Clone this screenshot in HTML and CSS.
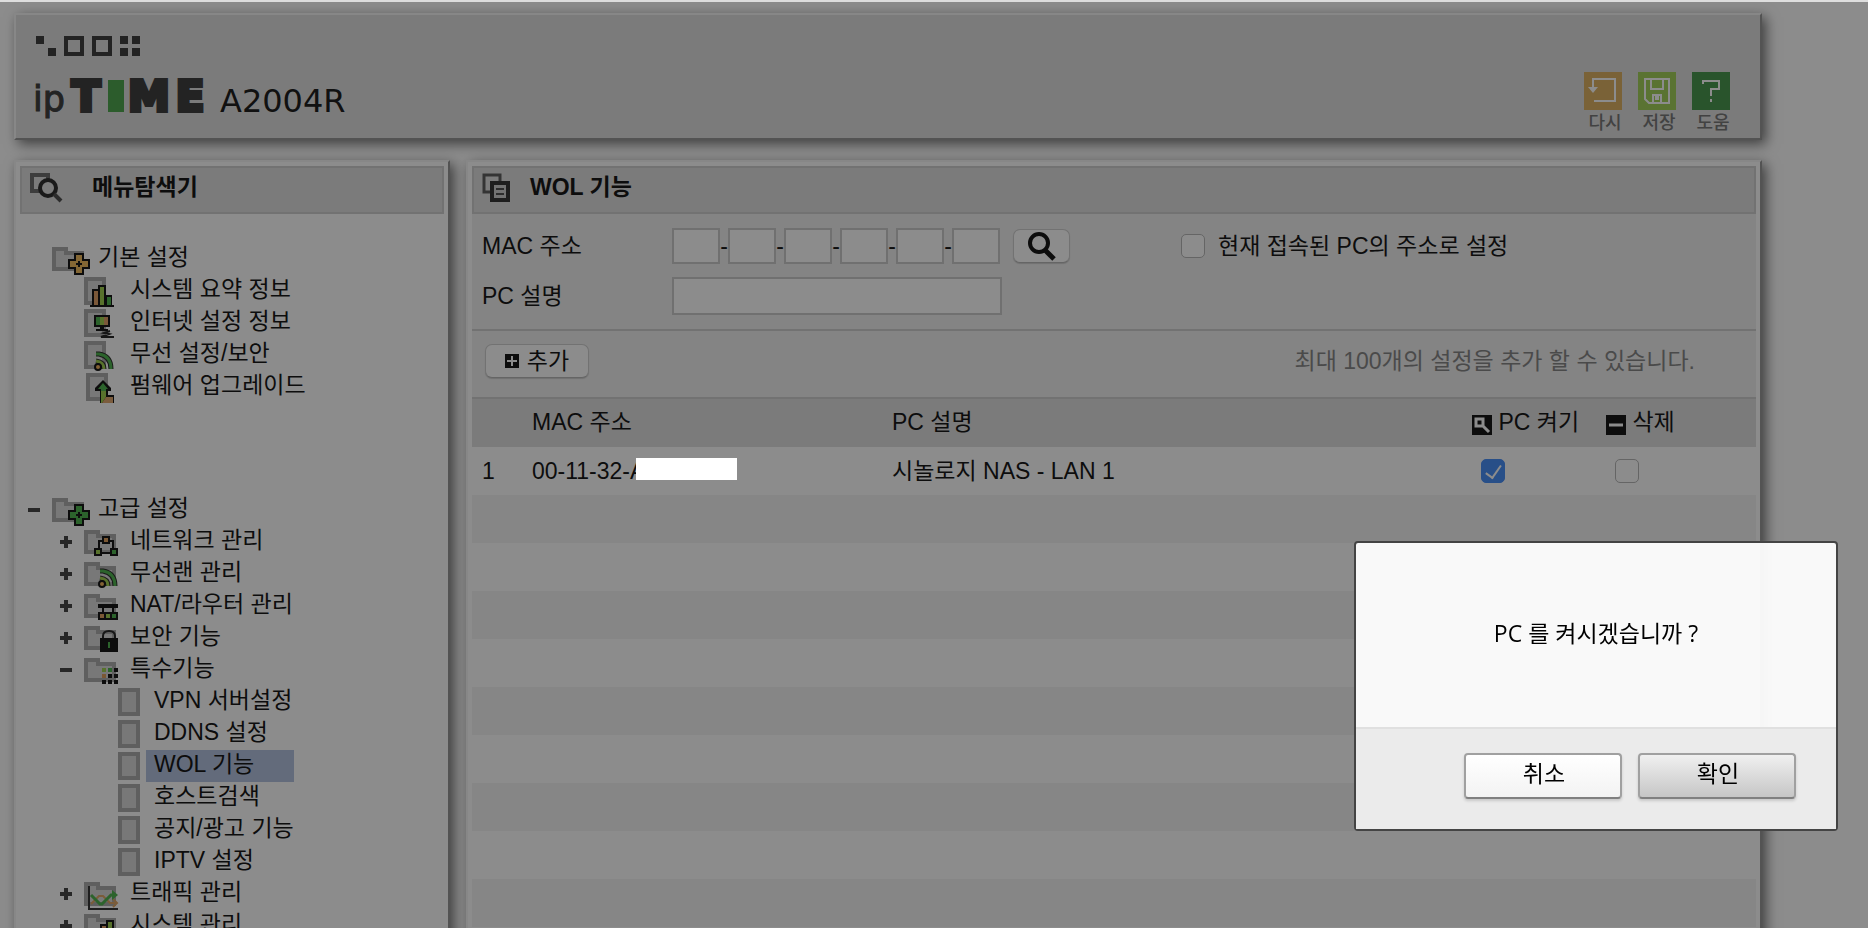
FILE: index.html
```html
<!DOCTYPE html>
<html lang="ko">

<head>
    <meta charset="UTF-8">
    <meta name="viewport" content="width=device-width, initial-scale=1.0">
    <title>ipTIME A2004R</title>
    <link rel="stylesheet" href="styles.css">
</head>

<body>

    <!-- shared icon parts -->
    <svg class="defs" aria-hidden="true">
        <defs>
            <symbol id="folder" viewBox="0 0 32 24">
                <path fill="#adadad" d="M0 0h16v4h16v20H0z" />
                <path fill="#dadada" d="M4 4h8v4h16v12H4z" />
            </symbol>
            <symbol id="page" viewBox="0 0 22 28">
                <path fill="#adadad" d="M0 0h22v28H0z" />
                <path fill="#dadada" d="M4 4h14v20H4z" />
            </symbol>
            <symbol id="cross" viewBox="0 0 22 22">
                <path fill="#181818" d="M6 0h10v6h6v10h-6v6H6v-6H0V6h6z" />
                <path fill="currentColor" d="M8 2h6v6h6v6h-6v6H8v-6H2V8h6z" />
                <path fill="#181818" d="M10 8h2v2h2v2h-2v2h-2v-2H8v-2h2z" />
            </symbol>
            <symbol id="wifi" viewBox="0 0 20 20">
                <g fill="none">
                    <path stroke="#303030" stroke-width="5" d="M2 3h3q12 2 12 15M2 10q8 1 8 8" />
                    <path stroke="#50b450" stroke-width="3" d="M2 3h3q12 2 12 15" />
                    <path stroke="#a0d050" stroke-width="3" d="M2 10q8 1 8 8" />
                </g>
                <circle cx="4" cy="16" r="3" fill="#f0b460" stroke="#181818" stroke-width="2" />
            </symbol>
            <symbol id="bars" viewBox="0 0 24 22">
                <path fill="#181818" d="M0 20h2V4h6V0h8v10h6v10h2v2H0z" />
                <path fill="#e0a068" d="M4 6h4v14H4z" />
                <path fill="#a0d050" d="M10 2h4v18h-4z" />
                <path fill="#50b450" d="M17 12h4v8h-4z" />
            </symbol>
            <symbol id="plus" viewBox="0 0 12 12">
                <path fill="#484848" d="M4 0h4v4h4v4H8v4H4V8H0V4h4z" />
            </symbol>
            <symbol id="minus" viewBox="0 0 12 12">
                <path fill="#484848" d="M0 4h12v4H0z" />
            </symbol>
        </defs>
    </svg>

    <header class="header panel">
        <svg class="logo" width="340" height="90" viewBox="0 0 340 90" role="img" aria-label="ipTIME A2004R">
            <g fill="#404040">
                <path d="M4 4h8v8H4zM16 16h8v8h-8zM88 4h8v8h-8zM100 4h8v8h-8zM88 16h8v8h-8zM100 16h8v8h-8z" />
                <path fill="none" stroke="#404040" stroke-width="4" d="M34 6h16v16H34zM62 6h16v16H62z" />
            </g>
            <text class="logo-ip" x="1" y="79">ip</text>
            <text class="logo-time" x="54" y="79">T</text>
            <rect x="76" y="48" width="16" height="32" fill="#50a850" />
            <text class="logo-time" x="117" y="79">M</text>
            <text class="logo-time" x="158" y="79">E</text>
            <text class="logo-model" x="188" y="80">A2004R</text>
        </svg>

        <div class="tools">
            <button type="button" class="tool">
                <svg width="38" height="38" viewBox="0 0 38 38">
                    <path fill="#deb264" d="M0 0h38v38H0z" />
                    <path fill="none" stroke="#fff" stroke-width="2" d="M9 15V7h22v22H10" />
                    <path fill="#fff" d="M4 15h10l-5 6z" />
                </svg>
                <span>다시</span>
            </button>
            <button type="button" class="tool">
                <svg width="38" height="38" viewBox="0 0 38 38">
                    <path fill="#a4d15b" d="M0 0h38v38H0z" />
                    <path fill="none" stroke="#fff" stroke-width="2" d="M7 7h24v24H11l-4-4zM13 7v10h12V7M15 31v-8h8v8M18 25h2v2h-2z" />
                </svg>
                <span>저장</span>
            </button>
            <button type="button" class="tool">
                <svg width="38" height="38" viewBox="0 0 38 38">
                    <path fill="#4c9950" d="M0 0h38v38H0z" />
                    <path fill="none" stroke="#fff" stroke-width="2" d="M11 12V9h16v8h-8v7M19 27v3" />
                </svg>
                <span>도움</span>
            </button>
        </div>
    </header>

    <div class="panels">

        <nav class="sidebar panel">
            <h2 class="panel-title">
                <svg width="62" height="32" viewBox="0 0 62 32">
                    <path fill="none" stroke="#707070" stroke-width="4" d="M10 18H2V2h16v4" />
                    <circle cx="18" cy="15" r="8" fill="#e0e0e0" stroke="#303030" stroke-width="4" />
                    <path stroke="#505050" stroke-width="4" d="M24 21l7 7" />
                </svg>
                메뉴탐색기
            </h2>

            <ul class="tree">
                <li>
                    <div class="node">
                        <svg class="toggle"></svg>
                        <svg class="icon">
                            <use href="#folder" y="4" width="32" height="24" />
                            <use href="#cross" x="16" y="10" width="22" height="22" color="#f0bc60" />
                        </svg>
                        <a href="#">기본 설정</a>
                    </div>
                    <ul>
                        <li class="node">
                            <svg class="toggle"></svg>
                            <svg class="icon">
                                <use href="#page" y="2" width="22" height="28" />
                                <use href="#bars" x="6" y="10" width="24" height="22" />
                            </svg>
                            <a href="#">시스템 요약 정보</a>
                        </li>
                        <li class="node">
                            <svg class="toggle"></svg>
                            <svg class="icon">
                                <use href="#page" y="2" width="22" height="28" />
                                <path fill="#181818" d="M10 8h16v12h-6v2h4v2H12v-2h4v-2h-6z" />
                                <path fill="#50b450" d="M12 10h4v8h-4z" />
                                <path fill="#a0d050" d="M16 10h4v8h-4z" />
                                <path fill="#e0a068" d="M20 10h4v8h-4z" />
                                <path fill="none" stroke="#282828" stroke-width="2" d="M26 24l-6 2 5 1-8 3h13" />
                            </svg>
                            <a href="#">인터넷 설정 정보</a>
                        </li>
                        <li class="node">
                            <svg class="toggle"></svg>
                            <svg class="icon">
                                <use href="#page" y="2" width="22" height="28" />
                                <use href="#wifi" x="10" y="12" width="20" height="20" />
                            </svg>
                            <a href="#">무선 설정/보안</a>
                        </li>
                        <li class="node">
                            <svg class="toggle"></svg>
                            <svg class="icon">
                                <use href="#page" x="2" y="2" width="22" height="28" />
                                <path fill="#181818" d="M19 9l8 8v3h-3v4h6v8H16V20h-5v-3z" />
                                <path fill="#50b450" d="M19 12l5 6h-2v3h-5v-3h-3z" />
                                <path fill="#a0d050" d="M17 20h5v6l-4 6h-1z" />
                                <path fill="#e0a870" d="M22 26h7v6H18z" />
                            </svg>
                            <a href="#">펌웨어 업그레이드</a>
                        </li>
                    </ul>
                </li>

                <li>
                    <div class="node">
                        <svg class="toggle"><use href="#minus" y="10" width="12" height="12" /></svg>
                        <svg class="icon">
                            <use href="#folder" y="4" width="32" height="24" />
                            <use href="#cross" x="16" y="10" width="22" height="22" color="#50b450" />
                        </svg>
                        <a href="#">고급 설정</a>
                    </div>
                    <ul>
                        <li class="node">
                            <svg class="toggle"><use href="#plus" y="10" width="12" height="12" /></svg>
                            <svg class="icon">
                                <use href="#folder" y="4" width="32" height="24" />
                                <path fill="none" stroke="#181818" stroke-width="2" d="M22 15h-7v10M22 15h7v10M14 27h16" />
                                <path fill="#181818" d="M18 10h8v8h-8zM10 22h8v8h-8zM26 22h8v8h-8z" />
                                <path fill="#e0a060" d="M20 12h4v4h-4z" />
                                <path fill="#a0d050" d="M12 24h4v4h-4z" />
                                <path fill="#50b450" d="M28 24h4v4h-4z" />
                            </svg>
                            <a href="#">네트워크 관리</a>
                        </li>
                        <li class="node">
                            <svg class="toggle"><use href="#plus" y="10" width="12" height="12" /></svg>
                            <svg class="icon">
                                <use href="#folder" y="4" width="32" height="24" />
                                <use href="#wifi" x="14" y="10" width="20" height="20" />
                            </svg>
                            <a href="#">무선랜 관리</a>
                        </li>
                        <li class="node">
                            <svg class="toggle"><use href="#plus" y="10" width="12" height="12" /></svg>
                            <svg class="icon">
                                <use href="#folder" y="4" width="32" height="24" />
                                <path fill="#181818" d="M14 14h20v4H14zM18 18h2v4h-2zM28 18h2v4h-2zM14 22h20v8H14z" />
                                <path fill="#e0a060" d="M16 24h4v4h-4z" />
                                <path fill="#a0d050" d="M22 24h4v4h-4z" />
                                <path fill="#50b450" d="M28 24h4v4h-4z" />
                            </svg>
                            <a href="#">NAT/라우터 관리</a>
                        </li>
                        <li class="node">
                            <svg class="toggle"><use href="#plus" y="10" width="12" height="12" /></svg>
                            <svg class="icon">
                                <use href="#folder" y="4" width="32" height="24" />
                                <path fill="none" stroke="#282828" stroke-width="2" d="M19 17v-3q0-5 6-5t6 5v3" />
                                <path fill="#181818" d="M16 16h18v14H16z" />
                                <path fill="#50b450" d="M24 20h2v6h-2z" />
                            </svg>
                            <a href="#">보안 기능</a>
                        </li>
                        <li>
                            <div class="node">
                                <svg class="toggle"><use href="#minus" y="10" width="12" height="12" /></svg>
                                <svg class="icon">
                                    <use href="#folder" y="4" width="32" height="24" />
                                    <path fill="#a0d050" d="M18 14h4v4h-4z" />
                                    <path fill="#50b450" d="M24 14h4v4h-4z" />
                                    <path fill="#e0a060" d="M18 20h4v4h-4z" />
                                    <path fill="#181818" d="M30 14h4v4h-4zM24 20h4v4h-4zM30 20h4v4h-4zM18 26h4v4h-4zM24 26h4v4h-4zM30 26h4v4h-4z" />
                                </svg>
                                <a href="#">특수기능</a>
                            </div>
                            <ul class="leaves">
                                <li class="node"><svg class="icon"><use href="#page" y="2" width="22" height="28" /></svg><a href="#">VPN 서버설정</a></li>
                                <li class="node"><svg class="icon"><use href="#page" y="2" width="22" height="28" /></svg><a href="#">DDNS 설정</a></li>
                                <li class="node"><svg class="icon"><use href="#page" y="2" width="22" height="28" /></svg><a href="#" class="active">WOL 기능</a></li>
                                <li class="node"><svg class="icon"><use href="#page" y="2" width="22" height="28" /></svg><a href="#">호스트검색</a></li>
                                <li class="node"><svg class="icon"><use href="#page" y="2" width="22" height="28" /></svg><a href="#">공지/광고 기능</a></li>
                                <li class="node"><svg class="icon"><use href="#page" y="2" width="22" height="28" /></svg><a href="#">IPTV 설정</a></li>
                            </ul>
                        </li>
                        <li class="node">
                            <svg class="toggle"><use href="#plus" y="10" width="12" height="12" /></svg>
                            <svg class="icon">
                                <use href="#folder" y="4" width="32" height="24" />
                                <path fill="none" stroke="#383838" stroke-width="2" d="M5 8v23h29" />
                                <path fill="none" stroke="#e0a868" stroke-width="2" d="M7 26l8-8h4l7 7h5M29 21l4 4-4 4" />
                                <path fill="none" stroke="#50b450" stroke-width="3" d="M7 17l9 9h2l9-9h4" />
                                <path fill="#50b450" d="M28 12l6 5-6 5z" />
                            </svg>
                            <a href="#">트래픽 관리</a>
                        </li>
                        <li class="node">
                            <svg class="toggle"><use href="#plus" y="10" width="12" height="12" /></svg>
                            <svg class="icon">
                                <use href="#folder" y="4" width="32" height="24" />
                                <use href="#bars" x="14" y="10" width="24" height="22" />
                            </svg>
                            <a href="#">시스템 관리</a>
                        </li>
                    </ul>
                </li>
            </ul>
        </nav>

        <main class="content panel">
            <h1 class="panel-title">
                <svg width="48" height="32" viewBox="0 0 48 32">
                    <path fill="none" stroke="#606060" stroke-width="3" d="M8 19H2V2h16v6" />
                    <path fill="#d0d0d0" stroke="#383838" stroke-width="4" d="M10 10h16v17H10z" />
                    <path stroke="#505050" stroke-width="2" d="M14 16h8M14 21h8" />
                </svg>
                WOL 기능
            </h1>

            <form class="wol-form">
                <div class="field">
                    <label class="name" for="mac1">MAC 주소</label>
                    <input type="text" class="mac" id="mac1" maxlength="2">
                    <span class="dash">-</span>
                    <input type="text" class="mac" aria-label="MAC 2" maxlength="2">
                    <span class="dash">-</span>
                    <input type="text" class="mac" aria-label="MAC 3" maxlength="2">
                    <span class="dash">-</span>
                    <input type="text" class="mac" aria-label="MAC 4" maxlength="2">
                    <span class="dash">-</span>
                    <input type="text" class="mac" aria-label="MAC 5" maxlength="2">
                    <span class="dash">-</span>
                    <input type="text" class="mac" aria-label="MAC 6" maxlength="2">
                    <button type="button" class="btn btn-search" aria-label="검색">
                        <svg width="30" height="30" viewBox="0 0 30 30">
                            <circle cx="12" cy="12" r="9" fill="none" stroke="#181818" stroke-width="4" />
                            <path stroke="#181818" stroke-width="5" d="M18 19l9 9" />
                        </svg>
                    </button>
                    <label class="current"><input type="checkbox">현재 접속된 PC의 주소로 설정</label>
                </div>
                <div class="field">
                    <label class="name" for="desc">PC 설명</label>
                    <input type="text" class="desc" id="desc">
                </div>
            </form>

            <div class="toolbar">
                <button type="button" class="btn btn-add">
                    <svg width="14" height="14" viewBox="0 0 14 14">
                        <path fill="#181818" d="M0 0h14v14H0z" />
                        <path stroke="#fff" stroke-width="2" d="M7 2v10M2 7h10" />
                    </svg>
                    추가
                </button>
                <span class="hint">최대 100개의 설정을 추가 할 수 있습니다.</span>
            </div>

            <table class="list">
                <thead>
                    <tr>
                        <th class="col-no"></th>
                        <th class="col-mac">MAC 주소</th>
                        <th>PC 설명</th>
                        <th class="col-on">
                            <svg width="20" height="20" viewBox="0 0 20 20">
                                <path fill="#181818" d="M0 0h20v20H0z" />
                                <path fill="none" stroke="#fff" stroke-width="3" d="M4 4h7v7H4zM11 11l6 6" />
                            </svg>
                            PC 켜기
                        </th>
                        <th class="col-del">
                            <svg width="20" height="20" viewBox="0 0 20 20">
                                <path fill="#181818" d="M0 0h20v20H0z" />
                                <path stroke="#fff" stroke-width="3" d="M3 10h14" />
                            </svg>
                            삭제
                        </th>
                    </tr>
                </thead>
                <tbody>
                    <tr>
                        <td class="col-no">1</td>
                        <td>00-11-32-A<span class="mask"></span></td>
                        <td>시놀로지 NAS - LAN 1</td>
                        <td class="check"><input type="checkbox" aria-label="PC 켜기" checked></td>
                        <td class="check"><input type="checkbox" aria-label="삭제"></td>
                    </tr>
                    <tr><td colspan="5"></td></tr>
                    <tr><td colspan="5"></td></tr>
                    <tr><td colspan="5"></td></tr>
                    <tr><td colspan="5"></td></tr>
                    <tr><td colspan="5"></td></tr>
                    <tr><td colspan="5"></td></tr>
                    <tr><td colspan="5"></td></tr>
                    <tr><td colspan="5"></td></tr>
                    <tr><td colspan="5"></td></tr>
                    <tr><td colspan="5"></td></tr>
                </tbody>
            </table>
        </main>
    </div>

    <div class="overlay"></div>

    <div class="dialog" role="dialog" aria-modal="true" aria-labelledby="dialog-text">
        <p class="dialog-text" id="dialog-text">PC 를 켜시겠습니까 ?</p>
        <div class="dialog-buttons">
            <button type="button">취소</button>
            <button type="button" class="ok">확인</button>
        </div>
    </div>

</body>

</html>
```
FILE: styles.css
```css
* {
    box-sizing: border-box;
    margin: 0;
    padding: 0;
}

body {
    display: flex;
    flex-direction: column;
    gap: 20px;
    height: 100vh;
    overflow: hidden;
    padding: 11px 106px 0 14px;
    border-top: 2px solid #dedede;
    background: #fff;
    color: #181818;
    font-family: "Liberation Sans", "Noto Sans CJK KR", sans-serif;
    font-size: 23px;
    line-height: 28px;
}

button,
input {
    font: inherit;
    color: inherit;
}

ul {
    list-style: none;
}

a {
    color: inherit;
    text-decoration: none;
}

svg {
    display: block;
    flex: none;
}

.defs {
    position: absolute;
    width: 0;
    height: 0;
}

.panel {
    border: 2px solid;
    border-color: #f6f6f6 #989898 #989898 #f6f6f6;
    background: #fff;
    box-shadow: 4px 4px 12px rgba(0, 0, 0, .55);
}

/* HEADER ====================================== */
.header {
    display: flex;
    flex: none;
    justify-content: space-between;
    height: 127px;
    padding: 17px 30px 0 16px;
    background: #e0e0e0;
}

.logo text {
    font-family: "DejaVu Sans", sans-serif;
    fill: #404040;
}

.logo .logo-ip {
    font-size: 35px;
    stroke: #404040;
    stroke-width: 1px;
}

.logo .logo-time {
    font-size: 42px;
    font-weight: bold;
    text-anchor: middle;
    stroke: #404040;
    stroke-width: 4px;
}

.logo .logo-model {
    font-size: 32px;
    fill: #202020;
}

.tools {
    display: flex;
    gap: 16px;
    padding-top: 40px;
}

.tool {
    display: flex;
    flex-direction: column;
    align-items: center;
    align-self: flex-start;
    width: 38px;
    border: none;
    background: none;
    color: #787878;
    font-size: 18px;
    font-weight: 500;
    line-height: 26px;
    cursor: pointer;
}

.tool span {
    padding-left: 4px;
}

/* PANELS ====================================== */
.panels {
    display: flex;
    flex: 1 0 auto;
    gap: 16px;
}

.sidebar {
    flex: none;
    width: 436px;
    padding: 4px 4px 0;
}

.content {
    flex: 1;
    min-width: 0;
    padding: 4px 4px 0;
}

.panel-title {
    display: flex;
    height: 48px;
    padding: 5px 8px;
    border: 2px solid #d0d0d0;
    background: #e0e0e0;
    font-size: 23px;
    font-weight: bold;
}

/* TREE ======================================== */
.tree {
    padding: 29px 0 0 8px;
}

.tree > li + li {
    margin-top: 91px;
}

.tree ul {
    padding-left: 32px;
}

.node {
    display: flex;
    height: 32px;
}

.node a {
    padding-bottom: 4px;
    white-space: nowrap;
}

.toggle {
    width: 24px;
    height: 32px;
}

.icon {
    width: 46px;
    height: 32px;
}

.tree .leaves {
    width: max-content;
    padding-left: 58px;
}

.leaves .icon {
    width: 28px;
}

.leaves a {
    flex: 1;
    padding-left: 8px;
}

.leaves .active {
    background: #b4c3e0;
}

/* FORM ======================================== */
.wol-form {
    display: flex;
    flex-direction: column;
    gap: 13px;
    padding: 14px 10px;
    border-bottom: 2px solid #d0d0d0;
    background: #f0f0f0;
}

.field {
    display: flex;
    align-items: center;
}

.name {
    width: 190px;
}

input[type="text"] {
    border: 2px solid #ccc;
    background: #fff;
}

.mac {
    width: 48px;
    height: 36px;
}

.desc {
    width: 330px;
    height: 38px;
}

.dash {
    width: 8px;
    text-align: center;
}

.btn {
    display: flex;
    align-items: center;
    justify-content: center;
    height: 34px;
    border: 1px solid #d0d0d0;
    border-bottom-color: #b8b8b8;
    border-radius: 7px;
    background: #fff;
    box-shadow: 0 1px 1px rgba(0, 0, 0, .15);
}

.btn-search {
    width: 57px;
    margin-left: 13px;
}

.btn-add {
    gap: 8px;
    width: 104px;
}

input[type="checkbox"] {
    appearance: none;
    display: block;
    flex: none;
    width: 24px;
    height: 24px;
    border: 1px solid #b8b8b8;
    border-radius: 5px;
    background: #fff;
}

input[type="checkbox"]:checked {
    border-color: #4a90f8;
    background: #4a90f8;
}

/* tick */
input[type="checkbox"]:checked::after {
    content: '';
    display: block;
    width: 7px;
    height: 14px;
    margin: 2px 0 0 7px;
    border: solid #fff;
    border-width: 0 2px 2px 0;
    transform: rotate(35deg);
}

.current {
    display: flex;
    align-items: center;
    gap: 13px;
    margin-left: 111px;
}

/* TOOLBAR ===================================== */
.toolbar {
    display: flex;
    align-items: center;
    justify-content: space-between;
    padding: 13px 61px 19px 13px;
    background: #f0f0f0;
}

.hint {
    color: #888;
}

/* LIST ======================================== */
.list {
    width: 100%;
    table-layout: fixed;
    border-collapse: separate;
    border-spacing: 0;
}

.list th {
    height: 50px;
    padding-bottom: 2px;
    border-top: 2px solid #d0d0d0;
    background: #e0e0e0;
    font-weight: normal;
    text-align: left;
}

.list td {
    height: 48px;
}

.list tbody tr:nth-child(even) {
    background: #f5f5f5;
}

.list th svg {
    display: inline-block;
    vertical-align: -5px;
}

.list .col-no {
    width: 60px;
    padding-left: 10px;
}

.col-mac {
    width: 360px;
}

.col-on {
    width: 134px;
}

.col-del {
    width: 150px;
}

.check {
    padding-left: 9px;
}

.mask {
    display: inline-block;
    position: relative;
    z-index: 20;
    width: 101px;
    height: 22px;
    margin-left: -9px;
    background: #fff;
    vertical-align: -1px;
}

/* DIALOG ====================================== */
.overlay {
    position: fixed;
    inset: 2px 0 0 0;
    z-index: 10;
    background: rgba(0, 0, 0, .45);
}

.dialog {
    position: fixed;
    right: 30px;
    bottom: 97px;
    z-index: 30;
    width: 484px;
    border: 2px solid #444;
    border-radius: 4px;
    background: rgba(255, 255, 255, .95);
    color: #000;
    font-family: "Open Sans", "Noto Sans CJK KR", sans-serif;
}

.dialog-text {
    padding: 76px 20px 80px;
    text-align: center;
}

.dialog-buttons {
    display: flex;
    justify-content: flex-end;
    gap: 16px;
    padding: 24px 40px 30px;
    border-top: 2px solid #e0e0e0;
    background: #ebebeb;
}

.dialog-buttons button {
    width: 158px;
    height: 46px;
    padding: 0 0 6px 2px;
    border: 2px solid #a0a0a0;
    border-bottom-color: #808080;
    border-radius: 4px;
    background: linear-gradient(#fff, #f3f3f3);
    box-shadow: 0 2px 3px rgba(0, 0, 0, .15);
}

.dialog-buttons .ok {
    background: linear-gradient(#f0f0f0, #c6c6c6);
}
```
